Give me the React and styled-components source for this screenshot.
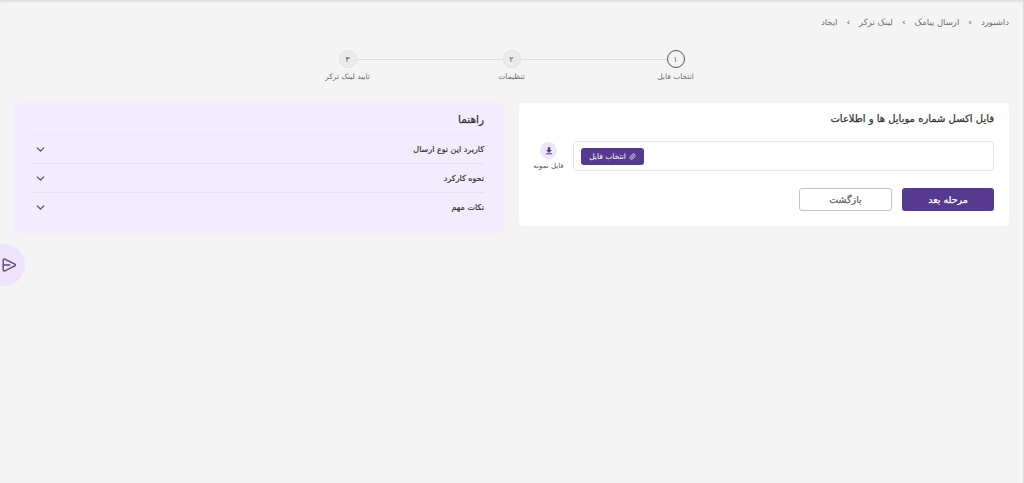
import React from 'react';
import styled, { createGlobalStyle } from 'styled-components';
import { ChevronDown, Paperclip } from 'lucide-react';

const GlobalStyle = createGlobalStyle`
	html, body {
		margin: 0;
		height: 100%;
		overflow: hidden;
		background: #f4f4f4;
	}
	body {
		font-family: 'DejaVu Sans', 'Noto Sans', sans-serif;
		color: #333;
	}
`;

const Page = styled.div`
	direction: rtl;
	position: relative;
	height: 483px;
	box-sizing: border-box;
	padding: 0 14px;
	border-right: 1px solid #dcdcdc;
	box-shadow: inset 0 3px 3px -2px rgba(0, 0, 0, 0.14);
`;

const Breadcrumb = styled.nav`
	display: flex;
	align-items: center;
	height: 16px;
	padding-top: 14px;
	font-size: 8.5px;
	color: #6f6f6f;
`;

const Crumb = styled.span`
	white-space: nowrap;
`;

const Separator = styled.span`
	margin: 0 9px;
	font-size: 9px;
	color: #555;
`;

const Stepper = styled.div`
	display: flex;
	justify-content: center;
	margin-top: 20px;
	height: 43px;
`;

const Step = styled.div`
	position: relative;
	width: 164px;
	display: flex;
	flex-direction: column;
	align-items: center;

	&:not(:last-child)::after {
		content: '';
		position: absolute;
		top: 9px;
		right: 91px;
		width: 146px;
		height: 1px;
		background: #dcdcdc;
	}
`;

const StepCircle = styled.div`
	width: 18px;
	height: 18px;
	border-radius: 50%;
	box-sizing: border-box;
	display: flex;
	align-items: center;
	justify-content: center;
	font-size: 8px;
	color: #555;
	background: ${p => (p.$active ? 'transparent' : '#ebebeb')};
	border: ${p => (p.$active ? '1px solid #555' : '1px solid #e2e2e2')};
`;

const StepLabel = styled.span`
	margin-top: 4px;
	font-size: 7.5px;
	color: #6e6e6e;
	white-space: nowrap;
`;

const Columns = styled.div`
	display: flex;
	align-items: flex-start;
	gap: 15px;
	margin-top: 10px;
`;

const UploadCard = styled.section`
	width: 490px;
	height: 123px;
	box-sizing: border-box;
	padding: 8px 15px 0 14px;
	background: #fff;
	border-radius: 4px;
`;

const CardTitle = styled.h2`
	margin: 0;
	height: 15px;
	line-height: 15px;
	font-size: 10px;
	font-weight: 400;
	-webkit-text-stroke: 0.25px #333;
	color: #333;
`;

const UploadRow = styled.div`
	display: flex;
	align-items: center;
	gap: 9px;
	margin-top: 15px;
`;

const FileBox = styled.div`
	width: 421px;
	height: 30px;
	box-sizing: border-box;
	display: flex;
	align-items: center;
	padding: 0 7px;
	border: 1px solid #e6e6e6;
	border-radius: 4px;
	justify-content: flex-end;
`;

const PickButton = styled.button`
	width: 63px;
	height: 17px;
	padding: 0;
	display: flex;
	align-items: center;
	justify-content: center;
	gap: 3px;
	border: 0;
	border-radius: 3px;
	background: #563a8f;
	color: #fff;
	font-family: inherit;
	font-size: 7.5px;
`;

const SampleFile = styled.div`
	width: 31px;
	display: flex;
	flex-direction: column;
	align-items: center;
	gap: 3px;
	font-size: 7px;
	color: #555;
	white-space: nowrap;
`;

const DownloadCircle = styled.div`
	width: 17px;
	height: 17px;
	border-radius: 50%;
	background: #eee5fb;
	display: flex;
	align-items: center;
	justify-content: center;
`;

const Actions = styled.div`
	display: flex;
	gap: 10px;
	margin-top: 17px;
`;

const ActionButton = styled.button`
	width: ${p => (p.$primary ? '92px' : '93px')};
	height: 23px;
	padding: 0;
	box-sizing: border-box;
	border-radius: 3px;
	font-family: inherit;
	font-size: 9.5px;
	font-weight: 400;
	-webkit-text-stroke: 0.25px currentColor;
	background: ${p => (p.$primary ? '#563a8f' : '#fff')};
	color: ${p => (p.$primary ? '#fff' : '#666')};
	border: ${p => (p.$primary ? '0' : '1px solid #c4c4c4')};
`;

const GuideCard = styled.aside`
	width: 490px;
	height: 130px;
	box-sizing: border-box;
	padding: 8px 20px 0 18px;
	background: #f3ecfe;
	border-radius: 4px;
`;

const GuideTitle = styled.h3`
	margin: 0;
	height: 23px;
	line-height: 17px;
	font-size: 10.5px;
	font-weight: 400;
	-webkit-text-stroke: 0.25px #333;
	color: #333;
	border-bottom: 1px solid #ece6f6;
`;

const GuideRow = styled.div`
	display: flex;
	align-items: center;
	justify-content: space-between;
	height: 29px;
	box-sizing: border-box;
	font-size: 8px;
	-webkit-text-stroke: 0.2px #333;
	color: #333;
	border-bottom: ${p => (p.$last ? '0' : '1px solid #e8e1f2')};
	svg {
		margin-left: 2px;
		color: #555;
		-webkit-text-stroke: 0;
	}
`;

const SendBubble = styled.div`
	position: absolute;
	left: -18px;
	top: 244px;
	width: 43px;
	height: 42px;
	border-radius: 50%;
	background: #eee3fd;
	direction: ltr;
	display: flex;
	align-items: center;
	justify-content: flex-end;
	padding-right: 8px;
	box-sizing: border-box;
`;

const steps = [
	{ num: '۱', label: 'انتخاب فایل', active: true },
	{ num: '۲', label: 'تنظیمات' },
	{ num: '۳', label: 'تایید لینک ترکر' },
];

const crumbs = ['داشبورد', 'ارسال پیامک', 'لینک ترکر', 'ایجاد'];
const guideItems = ['کاربرد این نوع ارسال', 'نحوه کارکرد', 'نکات مهم'];

export default function App() {
	return (
		<Page>
			<GlobalStyle />
			<Breadcrumb>
				{crumbs.map((c, i) => (
					<React.Fragment key={c}>
						<Crumb>{c}</Crumb>
						{i < crumbs.length - 1 && <Separator>›</Separator>}
					</React.Fragment>
				))}
			</Breadcrumb>

			<Stepper>
				{steps.map(s => (
					<Step key={s.num}>
						<StepCircle $active={s.active}>{s.num}</StepCircle>
						<StepLabel>{s.label}</StepLabel>
					</Step>
				))}
			</Stepper>

			<Columns>
				<UploadCard>
					<CardTitle>فایل اکسل شماره موبایل ها و اطلاعات</CardTitle>
					<UploadRow>
						<FileBox>
							<PickButton>
								<Paperclip size={7} />
								انتخاب فایل
							</PickButton>
						</FileBox>
						<SampleFile>
							<DownloadCircle>
								<svg width="10" height="10" viewBox="0 0 24 24" fill="#563a8f">
									<path d="M5 20h14v-2.5H5V20zM19 9.5h-4V3H9v6.5H5l7 7 7-7z" />
								</svg>
							</DownloadCircle>
							فایل نمونه
						</SampleFile>
					</UploadRow>
					<Actions>
						<ActionButton $primary>مرحله بعد</ActionButton>
						<ActionButton>بازگشت</ActionButton>
					</Actions>
				</UploadCard>

				<GuideCard>
					<GuideTitle>راهنما</GuideTitle>
					{guideItems.map((item, i) => (
						<GuideRow key={item} $last={i === guideItems.length - 1}>
							{item}
							<ChevronDown size={13} strokeWidth={2.4} />
						</GuideRow>
					))}
				</GuideCard>
			</Columns>

			<SendBubble>
				<svg width="16" height="16" viewBox="0 0 16 16" fill="none" stroke="#5b4a7d" strokeWidth="1.4" strokeLinejoin="round" strokeLinecap="round">
					<path d="M2.2 3.2c0-.9.8-1.4 1.6-1l10 4.9c.7.4.7 1.4 0 1.8l-10 4.9c-.8.4-1.6-.1-1.6-1z" />
					<path d="M2.4 8h6.4" />
				</svg>
			</SendBubble>
		</Page>
	);
}
